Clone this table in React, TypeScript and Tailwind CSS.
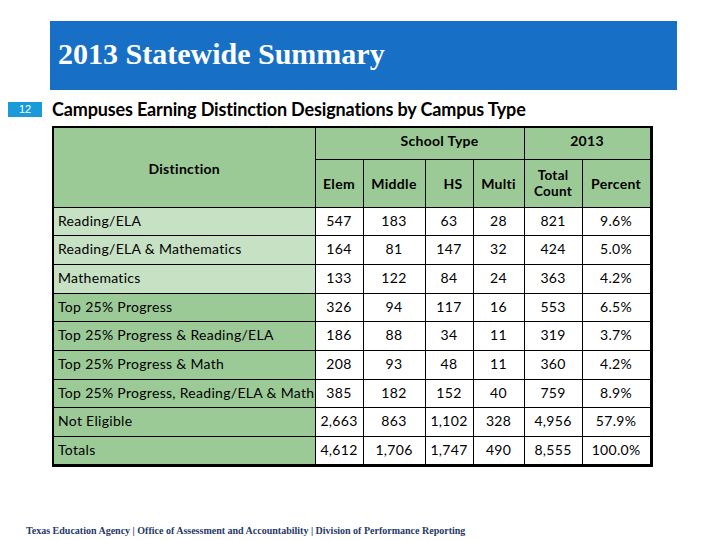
const rows: { label: string; light: boolean; v: string[] }[] = [
  { label: 'Reading/ELA', light: true, v: ['547', '183', '63', '28', '821', '9.6%'] },
  { label: 'Reading/ELA & Mathematics', light: true, v: ['164', '81', '147', '32', '424', '5.0%'] },
  { label: 'Mathematics', light: true, v: ['133', '122', '84', '24', '363', '4.2%'] },
  { label: 'Top 25% Progress', light: false, v: ['326', '94', '117', '16', '553', '6.5%'] },
  { label: 'Top 25% Progress & Reading/ELA', light: false, v: ['186', '88', '34', '11', '319', '3.7%'] },
  { label: 'Top 25% Progress & Math', light: false, v: ['208', '93', '48', '11', '360', '4.2%'] },
  { label: 'Top 25% Progress, Reading/ELA & Math', light: false, v: ['385', '182', '152', '40', '759', '8.9%'] },
  { label: 'Not Eligible', light: false, v: ['2,663', '863', '1,102', '328', '4,956', '57.9%'] },
  { label: 'Totals', light: false, v: ['4,612', '1,706', '1,747', '490', '8,555', '100.0%'] },
];

const widths = [262, 48, 62, 48, 51, 58, 69];

export default function App() {
  return (
    <div className="w-[720px] h-[540px] bg-white relative flex flex-col font-['Lato','Open_Sans',sans-serif] text-black">
      <div className="ml-[50px] mt-[21px] w-[627px] h-[69px] bg-[#1770c5] flex items-center pl-[8px] pb-[4px]">
        <h1 className="font-['Liberation_Serif',serif] font-bold text-[30px] text-white leading-none">2013 Statewide Summary</h1>
      </div>

      <div className="flex items-center mt-[9px] h-[20px]">
        <div className="ml-[8px] w-[34px] h-[15px] bg-[#1a9ad8] text-white text-[11px] leading-[15px] text-center font-['Liberation_Sans',sans-serif]">
          12
        </div>
        <div className="ml-[10px] text-[18px] font-bold leading-none tracking-[-0.15px]">
          Campuses Earning Distinction Designations by Campus Type
        </div>
      </div>

      <table className="ml-[52px] mt-[7px] border-collapse border-t-2 border-l-2 border-r-[3px] border-b-[3px] border-black text-[14px] tracking-[0.3px] table-fixed w-[598px]">
        <colgroup>
          {widths.map((w, i) => (
            <col key={i} style={{ width: w }} />
          ))}
        </colgroup>
        <thead>
          <tr className="h-[32px] bg-[#9cca97] font-bold">
            <th rowSpan={2} className="border border-black font-bold align-middle pt-[2px]">
              Distinction
            </th>
            <th colSpan={4} className="border border-black font-bold align-top pt-[2px] pl-[40px]">
              School Type
            </th>
            <th colSpan={2} className="border border-black font-bold align-top pt-[2px]">
              2013
            </th>
          </tr>
          <tr className="h-[48px] bg-[#9cca97]">
            <th className="border border-black font-bold">Elem</th>
            <th className="border border-black font-bold">Middle</th>
            <th className="border border-black font-bold pl-[8px]">HS</th>
            <th className="border border-black font-bold">Multi</th>
            <th className="border border-black font-bold text-[13.5px] leading-[16px]">
              <div>Total</div>
              <div>Count</div>
            </th>
            <th className="border border-black font-bold">Percent</th>
          </tr>
        </thead>
        <tbody>
          {rows.map((r) => (
            <tr key={r.label} className="h-[28.7px]">
              <td
                className={
                  'border border-black pl-[4px] align-top pt-[2px] whitespace-nowrap ' +
                  (r.light ? 'bg-[#c6e1c3]' : 'bg-[#9cca97]')
                }
              >
                {r.label}
              </td>
              {r.v.map((x, i) => (
                <td key={i} className="border border-black text-center align-top pt-[2px] bg-white">
                  {x}
                </td>
              ))}
            </tr>
          ))}
        </tbody>
      </table>

      <div className="mt-auto mb-[4px] ml-[26px] font-['Liberation_Serif',serif] font-bold text-[10px] text-[#1f3a68] leading-none">
        Texas Education Agency | Office of Assessment and Accountability | Division of Performance Reporting
      </div>
    </div>
  );
}
